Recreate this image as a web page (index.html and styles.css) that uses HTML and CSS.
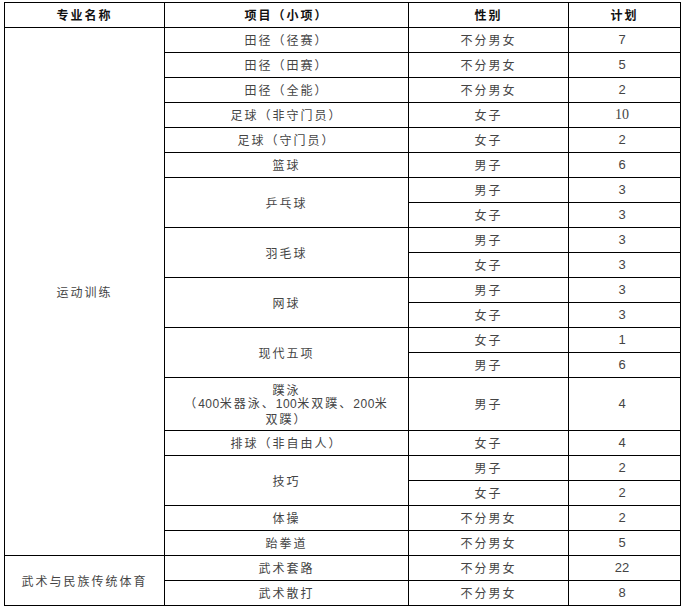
FILE: index.html
```html
<!DOCTYPE html>
<html lang="zh-CN">
<head>
<meta charset="utf-8">
<title>招生计划</title>
<link rel="stylesheet" href="styles.css">
</head>
<body>
<table class="plan">
  <colgroup>
    <col class="c-major">
    <col class="c-item">
    <col class="c-sex">
    <col class="c-num">
  </colgroup>
  <thead>
    <tr><th>专业名称</th><th>项目（小项）</th><th>性别</th><th>计划</th></tr>
  </thead>
  <tbody>
    <tr><td rowspan="20">运动训练</td><td>田径（径赛）</td><td>不分男女</td><td class="num">7</td></tr>
    <tr><td>田径（田赛）</td><td>不分男女</td><td class="num">5</td></tr>
    <tr><td>田径（全能）</td><td>不分男女</td><td class="num">2</td></tr>
    <tr><td>足球（非守门员）</td><td>女子</td><td class="num serif">10</td></tr>
    <tr><td>足球（守门员）</td><td>女子</td><td class="num">2</td></tr>
    <tr><td>篮球</td><td>男子</td><td class="num">6</td></tr>
    <tr><td rowspan="2">乒乓球</td><td>男子</td><td class="num">3</td></tr>
    <tr><td>女子</td><td class="num">3</td></tr>
    <tr><td rowspan="2">羽毛球</td><td>男子</td><td class="num">3</td></tr>
    <tr><td>女子</td><td class="num">3</td></tr>
    <tr><td rowspan="2">网球</td><td>男子</td><td class="num">3</td></tr>
    <tr><td>女子</td><td class="num">3</td></tr>
    <tr><td rowspan="2">现代五项</td><td>女子</td><td class="num">1</td></tr>
    <tr><td>男子</td><td class="num">6</td></tr>
    <tr class="tall"><td class="multi">蹼泳<br>（<span class="d">400</span>米器泳、<span class="d">100</span>米双蹼、<span class="d">200</span>米<br>双蹼）</td><td>男子</td><td class="num">4</td></tr>
    <tr><td>排球（非自由人）</td><td>女子</td><td class="num">4</td></tr>
    <tr><td rowspan="2">技巧</td><td>男子</td><td class="num">2</td></tr>
    <tr><td>女子</td><td class="num">2</td></tr>
    <tr><td>体操</td><td>不分男女</td><td class="num">2</td></tr>
    <tr><td>跆拳道</td><td>不分男女</td><td class="num">5</td></tr>
    <tr><td rowspan="2">武术与民族传统体育</td><td>武术套路</td><td>不分男女</td><td class="num">22</td></tr>
    <tr><td>武术散打</td><td>不分男女</td><td class="num">8</td></tr>
  </tbody>
</table>
</body>
</html>
```

FILE: styles.css
```css
html, body {
  margin: 0;
  padding: 0;
  background: #ffffff;
}

body {
  padding: 2px 0 0 4px;
}

.plan {
  border-collapse: collapse;
  table-layout: fixed;
  width: 676px;
  font-family: "Noto Sans CJK SC", "Noto Sans", sans-serif;
  font-size: 12px;
  color: #444;
}

.c-major { width: 160px; }
.c-item { width: 244px; }
.c-sex { width: 160px; }
.c-num { width: 112px; }

.plan th,
.plan td {
  border: 1px solid #000;
  padding: 0;
  text-align: center;
  vertical-align: middle;
  letter-spacing: 2px;
  line-height: 14px;
}

.plan tr {
  height: 25px;
}

.plan tr.tall {
  height: 53px;
}

.plan th {
  font-weight: 700;
  color: #111;
}

.plan td.num {
  font-family: "Liberation Sans", Arial, sans-serif;
  font-size: 13px;
  letter-spacing: 0;
  padding-right: 5px;
}

.plan td.num.serif {
  font-family: "Liberation Serif", "Times New Roman", serif;
  font-size: 14px;
}

.plan td.multi {
  line-height: 13.5px;
}

.d {
  font-family: "Liberation Sans", Arial, sans-serif;
  letter-spacing: 0.5px;
}
```
